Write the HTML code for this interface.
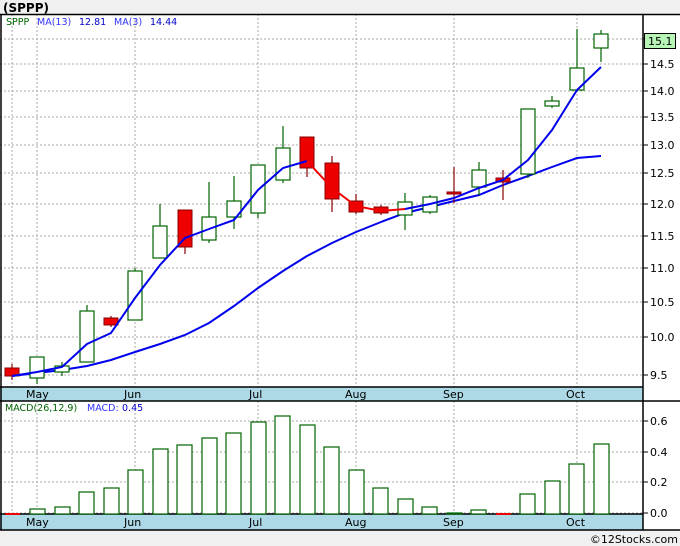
<!DOCTYPE html>
<html><head><style>
body{margin:0;width:680px;height:546px;overflow:hidden;background:#fff;font-family:"DejaVu Sans","Liberation Sans",sans-serif}
svg{display:block}
</style></head><body>
<svg width="680" height="546" xmlns="http://www.w3.org/2000/svg" font-family="DejaVu Sans, Liberation Sans, sans-serif">
<rect x="0" y="0" width="680" height="546" fill="#f0f0f0"/>
<rect x="0" y="14" width="643" height="373" fill="#fff"/>
<rect x="0" y="401" width="643" height="113" fill="#fff"/>
<rect x="0" y="387" width="643" height="14" fill="#add8e6"/>
<rect x="0" y="514" width="643" height="16" fill="#add8e6"/>
<rect x="643" y="14" width="37" height="516" fill="#fff"/>
<text x="3" y="12" font-size="12" font-weight="bold" fill="#000">(SPPP)</text>
<g stroke="#aaa" stroke-dasharray="2,2" stroke-width="1">
<line x1="12" y1="14" x2="12" y2="387"/><line x1="37" y1="14" x2="37" y2="387"/><line x1="135" y1="14" x2="135" y2="387"/><line x1="258" y1="14" x2="258" y2="387"/><line x1="356" y1="14" x2="356" y2="387"/><line x1="454" y1="14" x2="454" y2="387"/><line x1="577" y1="14" x2="577" y2="387"/>
<line x1="12" y1="401" x2="12" y2="514"/><line x1="37" y1="401" x2="37" y2="514"/><line x1="135" y1="401" x2="135" y2="514"/><line x1="258" y1="401" x2="258" y2="514"/><line x1="356" y1="401" x2="356" y2="514"/><line x1="454" y1="401" x2="454" y2="514"/><line x1="577" y1="401" x2="577" y2="514"/>
<line x1="0" y1="39" x2="643" y2="39"/><line x1="0" y1="64" x2="643" y2="64"/><line x1="0" y1="91" x2="643" y2="91"/><line x1="0" y1="117" x2="643" y2="117"/><line x1="0" y1="145" x2="643" y2="145"/><line x1="0" y1="173" x2="643" y2="173"/><line x1="0" y1="204" x2="643" y2="204"/><line x1="0" y1="236" x2="643" y2="236"/><line x1="0" y1="268" x2="643" y2="268"/><line x1="0" y1="302" x2="643" y2="302"/><line x1="0" y1="337" x2="643" y2="337"/><line x1="0" y1="375" x2="643" y2="375"/>
<line x1="0" y1="421" x2="643" y2="421"/><line x1="0" y1="452" x2="643" y2="452"/><line x1="0" y1="482" x2="643" y2="482"/><line x1="0" y1="513" x2="643" y2="513"/>
</g>
<g stroke="#000" stroke-width="1.5" fill="none">
<line x1="0" y1="14.5" x2="680" y2="14.5"/>
<line x1="0" y1="387" x2="643" y2="387"/><line x1="0" y1="401" x2="680" y2="401"/>
<line x1="0" y1="514" x2="643" y2="514"/><line x1="0" y1="530" x2="680" y2="530"/>
<line x1="643" y1="14" x2="643" y2="530"/><line x1="1" y1="14" x2="1" y2="530"/>
</g>
<g stroke="#000" stroke-width="1">
<line x1="643" y1="39" x2="648" y2="39"/><line x1="643" y1="64" x2="648" y2="64"/><line x1="643" y1="91" x2="648" y2="91"/><line x1="643" y1="117" x2="648" y2="117"/><line x1="643" y1="145" x2="648" y2="145"/><line x1="643" y1="173" x2="648" y2="173"/><line x1="643" y1="204" x2="648" y2="204"/><line x1="643" y1="236" x2="648" y2="236"/><line x1="643" y1="268" x2="648" y2="268"/><line x1="643" y1="302" x2="648" y2="302"/><line x1="643" y1="337" x2="648" y2="337"/><line x1="643" y1="375" x2="648" y2="375"/>
<line x1="643" y1="421" x2="648" y2="421"/><line x1="643" y1="452" x2="648" y2="452"/><line x1="643" y1="482" x2="648" y2="482"/><line x1="643" y1="513" x2="648" y2="513"/>
</g>
<g font-size="11" fill="#000">
<text x="650" y="68">14.5</text><text x="650" y="95">14.0</text><text x="650" y="121">13.5</text><text x="650" y="149">13.0</text><text x="650" y="177">12.5</text><text x="650" y="208">12.0</text><text x="650" y="240">11.5</text><text x="650" y="272">11.0</text><text x="650" y="306">10.5</text><text x="650" y="341">10.0</text><text x="650" y="379">9.5</text>
<text x="650" y="425">0.6</text><text x="650" y="456">0.4</text><text x="650" y="486">0.2</text><text x="650" y="517">0.0</text>
<text x="26" y="398">May</text><text x="124" y="398">Jun</text><text x="249" y="398">Jul</text><text x="345" y="398">Aug</text><text x="443" y="398">Sep</text><text x="566" y="398">Oct</text>
<text x="26" y="526">May</text><text x="124" y="526">Jun</text><text x="249" y="526">Jul</text><text x="345" y="526">Aug</text><text x="443" y="526">Sep</text><text x="566" y="526">Oct</text>
<text x="678" y="543" font-size="11" text-anchor="end">©12Stocks.com</text>
</g>
<rect x="644.5" y="33.5" width="31" height="15" fill="#b6f5b6" stroke="#000"/>
<text x="648" y="45" font-size="11">15.1</text>
<g font-size="9.5">
<text x="6" y="25" fill="#006400">SPPP</text>
<text x="37" y="25" fill="#3333ff">MA(13)</text><text x="79" y="25" fill="#0000cc">12.81</text>
<text x="114" y="25" fill="#3333ff">MA(3)</text><text x="150" y="25" fill="#0000cc">14.44</text>
<text x="5" y="411" fill="#006400">MACD(26,12,9)</text><text x="87" y="411" fill="#3333ff">MACD:</text><text x="122" y="411" fill="#0000cc">0.45</text>
</g>
<polyline fill="none" stroke="#0000ee" stroke-width="2" points="12,376 62,370 87,366 111,360 135,352 160,344 185,335 209,323 234,306 258,288 283,271 307,256 332,243 356,232 381,222 405,213 430,207 454,201 479,195 503,185 528,176 552,167 577,158 601,156"/>
<g stroke="#006400" stroke-width="1.2">
<line x1="37" y1="357" x2="37" y2="384"/><line x1="62" y1="362" x2="62" y2="376"/><line x1="87" y1="305" x2="87" y2="362"/><line x1="135" y1="268" x2="135" y2="320"/><line x1="160" y1="204" x2="160" y2="258"/><line x1="209" y1="182" x2="209" y2="243"/><line x1="234" y1="176" x2="234" y2="229"/><line x1="258" y1="165" x2="258" y2="218"/><line x1="283" y1="126" x2="283" y2="183"/><line x1="405" y1="193" x2="405" y2="230"/><line x1="430" y1="195" x2="430" y2="214"/><line x1="479" y1="162" x2="479" y2="195"/><line x1="528" y1="109" x2="528" y2="178"/><line x1="552" y1="96" x2="552" y2="108"/><line x1="577" y1="29" x2="577" y2="92"/><line x1="601" y1="30" x2="601" y2="62"/>
</g>
<g stroke="#800" stroke-width="1.2">
<line x1="12" y1="364" x2="12" y2="380"/><line x1="111" y1="316" x2="111" y2="327"/><line x1="185" y1="210" x2="185" y2="254"/><line x1="307" y1="137" x2="307" y2="177"/><line x1="332" y1="156" x2="332" y2="212"/><line x1="356" y1="194" x2="356" y2="214"/><line x1="381" y1="205" x2="381" y2="215"/><line x1="454" y1="167" x2="454" y2="203"/><line x1="503" y1="170" x2="503" y2="200"/>
</g>
<g fill="#fff" stroke="#006400" stroke-width="1.2">
<rect x="30" y="357" width="14" height="21"/><rect x="55" y="366" width="14" height="6"/><rect x="80" y="311" width="14" height="51"/><rect x="128" y="271" width="14" height="49"/><rect x="153" y="226" width="14" height="32"/><rect x="202" y="217" width="14" height="23"/><rect x="227" y="201" width="14" height="16"/><rect x="251" y="165" width="14" height="48"/><rect x="276" y="148" width="14" height="32"/><rect x="398" y="202" width="14" height="13"/><rect x="423" y="197" width="14" height="15"/><rect x="472" y="170" width="14" height="17"/><rect x="521" y="109" width="14" height="65"/><rect x="545" y="101" width="14" height="5"/><rect x="570" y="68" width="14" height="22"/><rect x="594" y="34" width="14" height="14"/>
</g>
<g fill="#ee0000" stroke="#800" stroke-width="1">
<rect x="5" y="368" width="14" height="8"/><rect x="104" y="318" width="14" height="7"/><rect x="178" y="210" width="14" height="37"/><rect x="300" y="137" width="14" height="31"/><rect x="325" y="163" width="14" height="36"/><rect x="349" y="201" width="14" height="11"/><rect x="374" y="207" width="14" height="6"/><rect x="447" y="192" width="14" height="2"/><rect x="496" y="178" width="14" height="4"/>
</g>
<polyline fill="none" stroke="#0000ee" stroke-width="2" points="12,376 37,372 62,367 87,344 111,333 135,298 160,265 185,238 209,229 234,220 258,190 283,168 307,161"/>
<polyline fill="none" stroke="#ee0000" stroke-width="2" points="307,161 332,188 356,206 381,211 405,209"/>
<polyline fill="none" stroke="#0000ee" stroke-width="2" points="405,209 430,204 454,198 479,188 503,180 528,160 552,130 577,90 601,67"/>
<g fill="#fff" stroke="#006400" stroke-width="1.2">
<rect x="30" y="509" width="15" height="5"/><rect x="55" y="507" width="15" height="7"/><rect x="79" y="492" width="15" height="22"/><rect x="104" y="488" width="15" height="26"/><rect x="128" y="470" width="15" height="44"/><rect x="153" y="449" width="15" height="65"/><rect x="177" y="445" width="15" height="69"/><rect x="202" y="438" width="15" height="76"/><rect x="226" y="433" width="15" height="81"/><rect x="251" y="422" width="15" height="92"/><rect x="275" y="416" width="15" height="98"/><rect x="300" y="425" width="15" height="89"/><rect x="324" y="447" width="15" height="67"/><rect x="349" y="470" width="15" height="44"/><rect x="373" y="488" width="15" height="26"/><rect x="398" y="499" width="15" height="15"/><rect x="422" y="507" width="15" height="7"/><rect x="447" y="513" width="15" height="1"/><rect x="471" y="510" width="15" height="4"/><rect x="520" y="494" width="15" height="20"/><rect x="545" y="481" width="15" height="33"/><rect x="569" y="464" width="15" height="50"/><rect x="594" y="444" width="15" height="70"/>
</g>
<rect x="5" y="513" width="15" height="2" fill="#ee0000"/>
<rect x="496" y="513" width="15" height="2" fill="#ee0000"/>
</svg>
</body></html>
